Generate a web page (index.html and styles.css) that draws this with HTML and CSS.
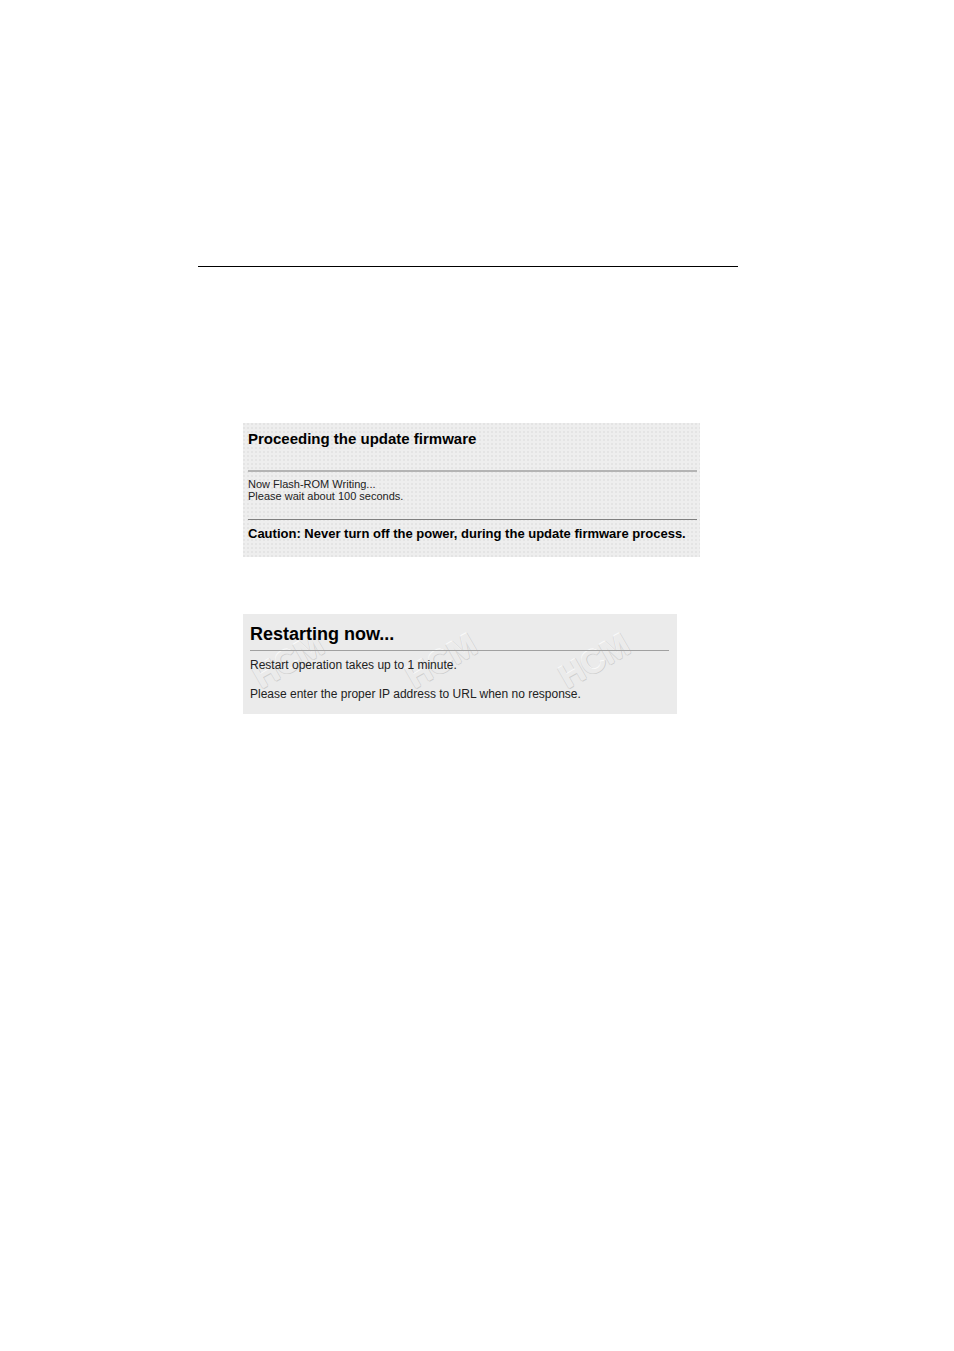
FILE: index.html
```html
<!DOCTYPE html>
<html lang="en">

<head>
    <meta charset="UTF-8">
    <meta name="viewport" content="width=device-width, initial-scale=1.0">
    <title>Update Firmware</title>
    <link rel="stylesheet" href="styles.css">
</head>

<body>
    <main class="page">
        <hr class="page-rule">
        <section class="panel update">
            <h1>Proceeding the update firmware</h1>
            <hr class="thick">
            <p>Now Flash-ROM Writing...<br>Please wait about 100 seconds.</p>
            <hr>
            <p class="caution">Caution: Never turn off the power, during the update firmware process.</p>
        </section>
        <section class="panel restart">
            <div class="watermark" aria-hidden="true">
                <span>HCM</span>
                <span>HCM</span>
                <span>HCM</span>
            </div>
            <h2>Restarting now...</h2>
            <hr>
            <p>Restart operation takes up to 1 minute.</p>
            <p>Please enter the proper IP address to URL when no response.</p>
        </section>
    </main>
</body>

</html>
```
FILE: styles.css
```css
body {
    margin: 0;
    background-color: #fff;
    color: #000;
    font-family: "Liberation Sans", Arial, sans-serif;
}

h1,
h2,
p,
hr {
    margin: 0;
}

.page {
    padding: 266px 216px 40px 198px;
}

.page-rule {
    border: none;
    border-top: 1px solid #000;
}

.panel {
    box-sizing: border-box;
    margin-left: 45px;
}

.panel hr {
    border: none;
    height: 1px;
}

.panel p {
    color: #222;
}

/* firmware update */
.update {
    max-width: 457px;
    margin-top: 156px;
    padding: 6px 3px 15px 5px;
    background-color: #eee;
    background-image: radial-gradient(circle at 1px 1px, #e4e4e4 1px, transparent 1px);
    background-size: 4px 4px;
}

.update h1 {
    font-size: 15px;
    line-height: 20px;
    margin-bottom: 21px;
}

.update hr {
    background-color: #808080;
}

.update .thick {
    height: 2px;
    background-color: #b4b4b4;
}

.update p {
    font-size: 11px;
    line-height: 12px;
    margin: 6px 0 17px;
}

.update .caution {
    color: #000;
    font-size: 13px;
    line-height: 16px;
    font-weight: bold;
    margin: 6px 0 0;
}

/* restart */
.restart {
    position: relative;
    max-width: 434px;
    margin-top: 57px;
    padding: 9px 8px 12px 7px;
    background-color: #ebebeb;
    overflow: hidden;
}

.restart h2,
.restart hr,
.restart p {
    position: relative;
}

.restart h2 {
    font-size: 18px;
    line-height: 22px;
    margin-bottom: 5px;
}

.restart hr {
    background-color: #a0a0a0;
}

.restart p {
    font-size: 12px;
    line-height: 16px;
    margin-top: 6px;
}

.restart p + p {
    margin-top: 13px;
}

/* embossed model name behind the text */
.watermark {
    position: absolute;
    top: 29px;
    left: 7px;
    display: flex;
    gap: 76px;
}

.watermark span {
    width: 77px;
    color: #ebebeb;
    font-size: 33px;
    line-height: 36px;
    font-weight: bold;
    text-align: center;
    text-shadow: 0 -1px #fafafa, -1px 0 #d8d8d8, 0 1px #cecece, 1px 0 #d2d2d2;
    transform: rotate(-30deg);
}
```
